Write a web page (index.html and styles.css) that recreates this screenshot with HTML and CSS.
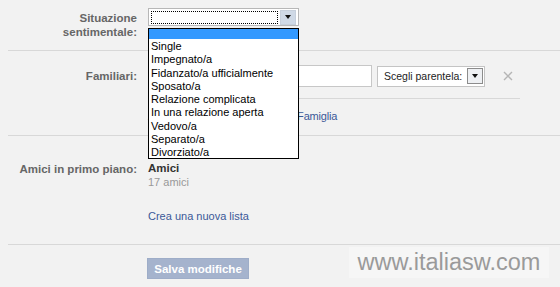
FILE: index.html
```html
<!DOCTYPE html>
<html>
<head>
<meta charset="utf-8">
<link rel="stylesheet" href="styles.css">
</head>
<body>
<div class="page">
  <div class="section s1">
    <div class="label lbl-two">Situazione<br>sentimentale:</div>
    <div class="content">
      <div class="select main-select">
        <div class="focus"></div>
        <div class="arrow"><span class="tri"></span></div>
      </div>
    </div>
  </div>

  <div class="section s2">
    <div class="label lbl-fam">Familiari:</div>
    <div class="content">
      <div class="fam-row">
        <div class="text-input"></div>
        <div class="select rel-select">
          <span class="sel-text">Scegli parentela:</span>
          <div class="arrow small"><span class="tri"></span></div>
        </div>
        <svg class="close" width="10" height="10" viewBox="0 0 10 10"><path d="M1 1L9 9M9 1L1 9" stroke="#b5b5b5" stroke-width="1.4"/></svg>
      </div>
      <a class="link fam-link">Aggiungi un altro membro della Famiglia</a>
    </div>
  </div>

  <div class="section s3">
    <div class="label lbl-amici">Amici in primo piano:</div>
    <div class="content">
      <div class="list-name">Amici</div>
      <div class="list-count">17 amici</div>
      <a class="link new-list">Crea una nuova lista</a>
    </div>
  </div>

  <div class="section s4">
    <div class="label"></div>
    <div class="content">
      <button class="save">Salva modifiche</button>
    </div>
  </div>

  <ul class="dropdown">
    <li class="sel">&nbsp;</li>
    <li>Single</li>
    <li>Impegnato/a</li>
    <li>Fidanzato/a ufficialmente</li>
    <li>Sposato/a</li>
    <li>Relazione complicata</li>
    <li>In una relazione aperta</li>
    <li>Vedovo/a</li>
    <li>Separato/a</li>
    <li>Divorziato/a</li>
  </ul>

  <div class="watermark">www.italiasw.com</div>
</div>
</body>
</html>
```
FILE: styles.css
```css
html, body {
  margin: 0;
  padding: 0;
  background: #f2f2f2;
}
body {
  font-family: "Liberation Sans", Arial, sans-serif;
  font-size: 11px;
  color: #333;
  width: 560px;
  height: 287px;
  overflow: hidden;
}
.page {
  position: relative;
  padding-left: 8px;
  height: 287px;
}
.section {
  display: grid;
  grid-template-columns: 129px 1fr;
  column-gap: 11px;
  border-bottom: 1px solid #d8d8d8;
}
.label {
  text-align: right;
  font-weight: bold;
  font-size: 11.5px;
  color: #666;
  line-height: 14px;
}
.s1 {
  height: 51px;
  padding-top: 8px;
  box-sizing: border-box;
}
.lbl-two {
  margin-top: 3px;
}
.select {
  box-sizing: border-box;
  background: #fff;
  border: 1px solid #b7b7b7;
  display: flex;
  align-items: center;
}
.main-select {
  width: 151px;
  height: 18px;
  padding: 1px 2px 1px 2px;
  gap: 2px;
}
.focus {
  flex: 1;
  height: 13px;
  border: 1px dotted #000;
  box-sizing: border-box;
}
.arrow {
  width: 16px;
  height: 15px;
  background: #cfd9e6;
  border: 1px solid #c6cfdb;
  box-sizing: border-box;
  display: flex;
  align-items: center;
  justify-content: center;
}
.tri {
  width: 0;
  height: 0;
  border-left: 3.5px solid transparent;
  border-right: 3.5px solid transparent;
  border-top: 4px solid #111;
}
.s2 {
  padding-top: 14px;
  padding-bottom: 12px;
}
.lbl-fam {
  line-height: 22px;
}
.fam-row {
  display: flex;
  align-items: center;
  width: 372px;
  height: 22px;
  padding-bottom: 11px;
  border-bottom: 1px solid #d8d8d8;
}
.text-input {
  width: 224px;
  height: 22px;
  box-sizing: border-box;
  background: #fff;
  border: 1px solid #c7c7c7;
}
.rel-select {
  margin-left: 5px;
  width: 108px;
  height: 21px;
  padding: 0 1px 0 6px;
  justify-content: space-between;
  border-color: #c4c4c4;
}
.sel-text {
  color: #222;
  font-size: 10.5px;
}
.arrow.small {
  width: 16px;
  height: 16px;
  background: #eef0f3;
  border: 1px solid #8c8c8c;
}
.close {
  margin-left: 18px;
}
.link {
  color: #3b5998;
  text-decoration: none;
  display: block;
  line-height: 14px;
}
.fam-link {
  margin-top: 10px;
  letter-spacing: -0.2px;
}
.s3 {
  padding-top: 25px;
  padding-bottom: 21px;
}
.lbl-amici {
  margin-top: 1px;
}
.list-name {
  font-weight: bold;
  font-size: 11.5px;
  color: #333;
  line-height: 14px;
}
.list-count {
  color: #999;
  line-height: 15px;
}
.new-list {
  margin-top: 19px;
}
.s4 {
  border-bottom: none;
  padding-top: 13px;
}
.save {
  justify-self: start;
  width: 102px;
  height: 21px;
  margin-left: -1px;
  background: #a5b3cd;
  border: 1px solid #9eadc8;
  color: #fff;
  font-family: "Liberation Sans", Arial, sans-serif;
  font-weight: bold;
  font-size: 11.5px;
  padding: 0;
}
.dropdown {
  position: absolute;
  left: 148px;
  top: 28px;
  width: 151px;
  height: 131px;
  box-sizing: border-box;
  margin: 0;
  padding: 0;
  list-style: none;
  background: #fff;
  border: 1px solid #000;
  color: #000;
  font-size: 11px;
}
.dropdown li {
  height: 13.25px;
  line-height: 13px;
  padding-left: 2px;
  white-space: nowrap;
}
.dropdown li.sel {
  background: #3399ff;
  height: 10px;
  margin-bottom: 1px;
}
.watermark {
  position: absolute;
  left: 349px;
  top: 247px;
  width: 200px;
  height: 31px;
  background: rgba(255,255,255,0.35);
  color: #9a9a9a;
  font-size: 23.5px;
  line-height: 31px;
  text-align: center;
}
```
